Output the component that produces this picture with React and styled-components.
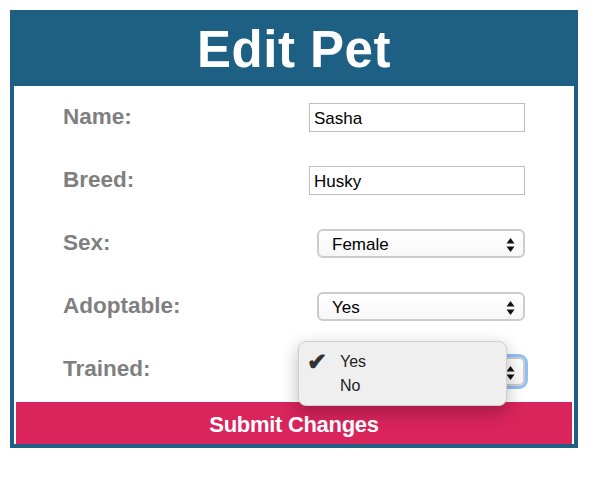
import React from 'react';
import styled, { createGlobalStyle } from 'styled-components';

const GlobalStyle = createGlobalStyle`
  body {
    margin: 0;
    background: #ffffff;
    font-family: "Liberation Sans", Arial, sans-serif;
  }
`;

const fields = [
  { label: 'Name:', type: 'text', value: 'Sasha' },
  { label: 'Breed:', type: 'text', value: 'Husky' },
  { label: 'Sex:', type: 'select', value: 'Female' },
  { label: 'Adoptable:', type: 'select', value: 'Yes' },
  { label: 'Trained:', type: 'select', value: 'Yes', open: true },
];

const Arrows = () => (
  <svg width="9" height="16" viewBox="0 0 9 16">
    <path d="M4.5 1 L8.5 6.5 L0.5 6.5 Z" fill="#111" />
    <path d="M4.5 15 L8.5 9.5 L0.5 9.5 Z" fill="#111" />
  </svg>
);

const App = () => {
  return (
    <Page>
      <GlobalStyle />
      <Card>
        <Header>Edit Pet</Header>
        <Form>
          {fields.map((f) => (
            <Row key={f.label}>
              <Label>{f.label}</Label>
              {f.type === 'text' ? (
                <TextInput defaultValue={f.value} />
              ) : (
                <SelectBox focused={f.open}>
                  <SelectValue hidden={f.open}>{f.value}</SelectValue>
                  <Arrows />
                </SelectBox>
              )}
              {f.open && (
                <Menu>
                  <MenuItem>
                    <Check>✔</Check>
                    Yes
                  </MenuItem>
                  <MenuItem>No</MenuItem>
                </Menu>
              )}
            </Row>
          ))}
          <SubmitButton>Submit Changes</SubmitButton>
        </Form>
      </Card>
    </Page>
  );
};

const Page = styled.div`
  padding: 10px;
  width: 600px;
  height: 480px;
  box-sizing: border-box;
`;

const Card = styled.div`
  width: 568px;
  border: 4px solid #1d6083;
  border-top: none;
  box-sizing: border-box;
  background: #ffffff;
`;

const Header = styled.h1`
  margin: 0 -4px;
  height: 76px;
  padding-top: 3px;
  box-sizing: border-box;
  background: #1d6083;
  color: #ffffff;
  font-family: "Liberation Sans", Arial, sans-serif;
  font-weight: bold;
  font-size: 51px;
  letter-spacing: 0.5px;
  display: flex;
  align-items: center;
  justify-content: center;
`;

const Form = styled.div`
  padding: 0 2px;
  display: flex;
  flex-direction: column;
`;

const Row = styled.div`
  position: relative;
  height: 63px;
  display: flex;
  align-items: center;
  justify-content: space-between;
  padding: 0 47px 0 47px;
`;

const Label = styled.label`
  color: #7f7f7f;
  font-weight: bold;
  font-size: 22.5px;
  padding-bottom: 2px;
`;

const TextInput = styled.input`
  width: 216px;
  height: 29px;
  box-sizing: border-box;
  border: 1px solid #bdbdbd;
  padding: 2px 4px 0;
  font-family: "Liberation Sans", Arial, sans-serif;
  font-size: 17px;
  color: #000;
  outline: none;
`;

const SelectBox = styled.div`
  width: 208px;
  height: 29px;
  box-sizing: border-box;
  margin-top: ${(p) => (p.focused ? '4px' : '0')};
  border: 2px solid #cccccc;
  border-radius: 6px;
  background: linear-gradient(#ffffff, #f7f7f7);
  display: flex;
  align-items: center;
  justify-content: space-between;
  padding: 2px 8px 0 13px;
  font-size: 17px;
  color: #000;
  box-shadow: ${(p) => (p.focused ? '0 0 0 3px #8fbff5' : 'none')};
`;

const SelectValue = styled.span`
  visibility: ${(p) => (p.hidden ? 'hidden' : 'visible')};
  display: inline;
`;

const Menu = styled.div`
  position: absolute;
  left: 282px;
  top: 3px;
  width: 209px;
  height: 65px;
  box-sizing: border-box;
  background: #efefef;
  border: 1px solid #cfcfcf;
  border-radius: 8px;
  box-shadow: 0 6px 18px rgba(0, 0, 0, 0.28);
  padding-top: 8px;
  z-index: 2;
`;

const MenuItem = styled.div`
  position: relative;
  height: 24px;
  display: flex;
  align-items: center;
  padding-left: 41px;
  font-size: 16px;
  color: #222;
`;

const Check = styled.span`
  position: absolute;
  left: 8px;
  font-size: 24px;
  font-weight: bold;
  color: #333;
`;

const SubmitButton = styled.button`
  height: 42px;
  margin-top: 1px;
  padding-top: 4px;
  border: none;
  background: #d9245c;
  color: #ffffff;
  font-family: "Liberation Sans", Arial, sans-serif;
  font-weight: bold;
  font-size: 22px;
  letter-spacing: -0.3px;
  cursor: pointer;
`;

export default App;
